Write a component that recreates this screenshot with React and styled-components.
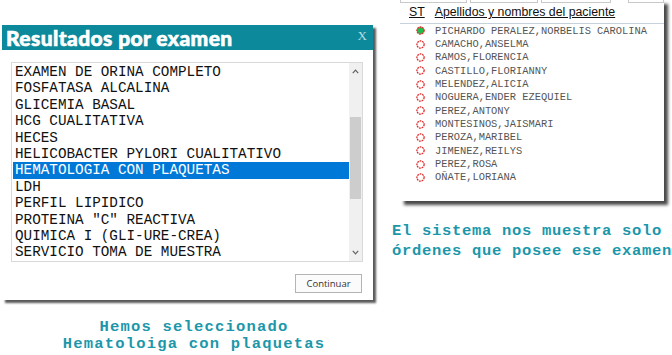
import React from "react";
import styled, { createGlobalStyle } from "styled-components";

const examenes = [
  "EXAMEN DE ORINA COMPLETO",
  "FOSFATASA ALCALINA",
  "GLICEMIA BASAL",
  "HCG CUALITATIVA",
  "HECES",
  "HELICOBACTER PYLORI CUALITATIVO",
  "HEMATOLOGIA CON PLAQUETAS",
  "LDH",
  "PERFIL LIPIDICO",
  'PROTEINA "C" REACTIVA',
  "QUIMICA I (GLI-URE-CREA)",
  "SERVICIO TOMA DE MUESTRA",
];

const pacientes = [
  "PICHARDO PERALEZ,NORBELIS CAROLINA",
  "CAMACHO,ANSELMA",
  "RAMOS,FLORENCIA",
  "CASTILLO,FLORIANNY",
  "MELENDEZ,ALICIA",
  "NOGUERA,ENDER EZEQUIEL",
  "PEREZ,ANTONY",
  "MONTESINOS,JAISMARI",
  "PEROZA,MARIBEL",
  "JIMENEZ,REILYS",
  "PEREZ,ROSA",
  "OÑATE,LORIANA",
];

const mono = `"Courier New", "Nimbus Mono PS", FreeMono, "Liberation Mono", monospace`;

const Global = createGlobalStyle`
  html, body { margin: 0; padding: 0; background: #fff; }
  body { width: 672px; height: 355px; overflow: hidden; }
`;

const Page = styled.div`
  display: flex;
  width: 672px;
  height: 355px;
`;

const LeftCol = styled.div`
  flex: 0 0 398px;
  padding: 25px 0 0 2px;
  box-sizing: border-box;
  display: flex;
  flex-direction: column;
`;

const RightCol = styled.div`
  flex: 1;
  min-width: 0;
  display: flex;
  flex-direction: column;
`;

const Dialog = styled.div`
  width: 371px;
  height: 275px;
  background: #fff;
  box-shadow: 3px 3px 2px #5a5a5a;
  display: flex;
  flex-direction: column;
`;

const TitleBar = styled.div`
  height: 25px;
  background: #0c899b;
  display: flex;
  align-items: center;
  justify-content: space-between;
  padding: 0 6px 0 4px;
`;

const Title = styled.div`
  font-family: Lato, "Open Sans", sans-serif;
  font-weight: 900;
  font-size: 21px;
  color: #fff;
  letter-spacing: 0.4px;
  -webkit-text-stroke: 0.6px #fff;
`;

const Close = styled.div`
  font-family: "Liberation Serif", serif;
  font-size: 13px;
  color: #b7dde3;
  margin-top: -4px;
`;

const Body = styled.div`
  flex: 1;
  padding: 12px 10px 0 9px;
  display: flex;
  flex-direction: column;
`;

const ListBox = styled.div`
  height: 198px;
  border: 1px solid #d9d9d9;
  display: flex;
  overflow: hidden;
`;

const Items = styled.div`
  flex: 1;
  padding: 1px 0 0 1px;
`;

const Item = styled.div`
  height: 16.4px;
  line-height: 16.4px;
  padding-left: 2px;
  font-family: ${mono};
  font-size: 14.3px;
  white-space: nowrap;
  color: ${(p) => (p.$sel ? "#fff" : "#111")};
  background: ${(p) => (p.$sel ? "#0078d7" : "transparent")};
`;

const Scroll = styled.div`
  width: 13px;
  background: #f0f0f0;
  display: flex;
  flex-direction: column;
  align-items: center;
`;

const Arrow = styled.div`
  height: 17px;
  display: flex;
  align-items: center;
  justify-content: center;
`;

const Thumb = styled.div`
  width: 11px;
  height: 82px;
  margin-top: 37px;
  background: #cdcdcd;
`;

const Spacer = styled.div`
  flex: 1;
`;

const ButtonRow = styled.div`
  display: flex;
  justify-content: flex-end;
  padding-top: 12px;
  padding-right: 1px;
`;

const Button = styled.button`
  width: 67px;
  height: 19px;
  padding: 0;
  border: 1px solid #b4b4b4;
  background: #fbfbfb;
  font-family: "Open Sans", sans-serif;
  font-size: 9.5px;
  color: #333;
`;

const Caption = styled.div`
  font-family: ${mono};
  font-weight: bold;
  font-size: 15.5px;
  letter-spacing: ${(p) => p.$ls || "1.2px"};
  line-height: ${(p) => p.$lh || "17px"};
  color: #1c97aa;
  white-space: nowrap;
  text-align: ${(p) => p.$align || "left"};
  margin-top: ${(p) => p.$mt || "0"};
  margin-left: ${(p) => p.$ml || "0"};
  width: ${(p) => p.$w || "auto"};
`;

const Panel = styled.div`
  width: 264px;
  height: 201px;
  margin-left: 2px;
  background: #fff;
  box-shadow: 4px 4px 3px #4a4a4a;
  display: flex;
  flex-direction: column;
`;

const TabStrip = styled.div`
  height: 3px;
  display: flex;
  gap: 3px;
`;

const Tab = styled.div`
  width: ${(p) => p.$w}px;
  margin-left: ${(p) => p.$ml || 0}px;
  border: 1px solid #c9c9c9;
  border-top: none;
`;

const Header = styled.div`
  height: 21px;
  border-bottom: 1px solid #c5d2de;
  display: flex;
  align-items: flex-end;
  gap: 10px;
  padding: 0 0 4px 9px;
  box-sizing: border-box;
  font-family: "Liberation Sans", Arial, sans-serif;
  font-size: 12.3px;
  color: #111;
  white-space: nowrap;
`;

const HeadCell = styled.span`
  text-decoration: underline;
`;

const Row = styled.div`
  height: 13.35px;
  display: flex;
  align-items: center;
  padding-left: 16px;
`;

const Name = styled.div`
  margin-left: 10px;
  font-family: ${mono};
  font-size: 10.4px;
  color: #555;
  white-space: nowrap;
`;

const Dot = ({ on }) => (
  <svg width="9" height="9" viewBox="0 0 9 9">
    <circle
      cx="4.5"
      cy="4.5"
      r="3.6"
      fill={on ? "#1fbf4c" : "#fff"}
      stroke="#e42a2a"
      strokeWidth="1.3"
      strokeDasharray="1.8 0.8"
    />
  </svg>
);

const Chevron = ({ up }) => (
  <svg width="7" height="5" viewBox="0 0 7 5">
    <path
      d={up ? "M0.8 4.2 L3.5 1.2 L6.2 4.2" : "M0.8 0.8 L3.5 3.8 L6.2 0.8"}
      fill="none"
      stroke="#606060"
      strokeWidth="1.2"
    />
  </svg>
);

export default function App() {
  return (
    <Page>
      <Global />
      <LeftCol>
        <Dialog>
          <TitleBar>
            <Title>Resultados por examen</Title>
            <Close>X</Close>
          </TitleBar>
          <Body>
            <ListBox>
              <Items>
                {examenes.map((e, i) => (
                  <Item key={e} $sel={i === 6}>
                    {e}
                  </Item>
                ))}
              </Items>
              <Scroll>
                <Arrow>
                  <Chevron up />
                </Arrow>
                <Thumb />
                <Spacer />
                <Arrow>
                  <Chevron />
                </Arrow>
              </Scroll>
            </ListBox>
            <ButtonRow>
              <Button>Continuar</Button>
            </ButtonRow>
          </Body>
        </Dialog>
        <Caption $align="center" $mt="19px" $lh="16.5px" $w="384px">
          Hemos seleccionado
          <br />
          Hematoloiga con plaquetas
        </Caption>
      </LeftCol>
      <RightCol>
        <Panel>
          <TabStrip>
            <Tab $w={66} />
            <Tab $w={67} />
            <Tab $w={69} />
            <Tab $w={34} $ml={14} />
          </TabStrip>
          <Header>
            <HeadCell>ST</HeadCell>
            <HeadCell>Apellidos y nombres del paciente</HeadCell>
          </Header>
          {pacientes.map((p, i) => (
            <Row key={p}>
              <Dot on={i === 0} />
              <Name>{p}</Name>
            </Row>
          ))}
        </Panel>
        <Caption $mt="20px" $lh="20px" $ls="0.7px" $ml="-6px">
          El sistema nos muestra solo
          <br />
          órdenes que posee ese examen
        </Caption>
      </RightCol>
    </Page>
  );
}
